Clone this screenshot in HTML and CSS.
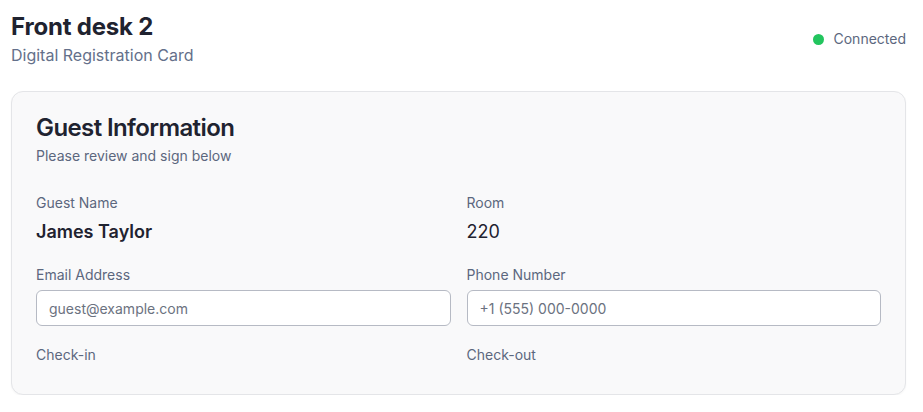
FILE: index.html
```html
<!DOCTYPE html>
<html>
<head>
<meta charset="utf-8">
<link rel="stylesheet" href="styles.css">
</head>
<body>
<div class="page">
  <header class="top">
    <div class="titles">
      <h1 class="title">Front desk 2</h1>
      <p class="subtitle">Digital Registration Card</p>
    </div>
    <div class="status"><span class="dot"></span><span class="status-text">Connected</span></div>
  </header>
  <section class="card">
    <h2 class="card-title">Guest Information</h2>
    <p class="card-sub">Please review and sign below</p>
    <div class="grid">
      <div class="field">
        <div class="label">Guest Name</div>
        <div class="value strong">James Taylor</div>
      </div>
      <div class="field">
        <div class="label">Room</div>
        <div class="value">220</div>
      </div>
      <div class="field">
        <div class="label">Email Address</div>
        <input class="input" type="text" placeholder="guest@example.com">
      </div>
      <div class="field">
        <div class="label">Phone Number</div>
        <input class="input" type="text" placeholder="+1 (555) 000-0000">
      </div>
      <div class="field">
        <div class="label">Check-in</div>
      </div>
      <div class="field">
        <div class="label">Check-out</div>
      </div>
    </div>
  </section>
</div>
</body>
</html>
```
FILE: styles.css
```css
* { box-sizing: border-box; }
html, body { margin: 0; padding: 0; background: #ffffff; }
body { font-family: Inter, "Noto Sans", sans-serif; color: #1f2937; }
.page { padding: 12px 17px 0 11px; }
.top { display: flex; justify-content: space-between; align-items: flex-start; }
.title { margin: 0; font-size: 24px; line-height: 30px; font-weight: 700; color: #1f2330; letter-spacing: -0.2px; }
.subtitle { margin: 1px 0 0; font-size: 16px; line-height: 24px; color: #64708a; }
.status { display: flex; align-items: center; gap: 9px; margin-top: 18px; }
.dot { width: 11px; height: 11px; border-radius: 50%; background: #22c55e; }
.status-text { font-size: 14px; line-height: 18px; color: #5c677e; }
.card { margin-top: 24px; background: #f9f9fa; border: 1px solid #e4e5e8; border-radius: 12px; padding: 20px 24px 29px; box-shadow: 0 1px 2px rgba(0,0,0,0.04); }
.card-title { margin: 0; font-size: 24px; line-height: 32px; font-weight: 600; color: #1f2330; letter-spacing: -0.6px; }
.card-sub { margin: 2px 0 0; font-size: 14px; line-height: 20px; color: #5c677e; }
.grid { display: grid; grid-template-columns: 1fr 1fr; column-gap: 16px; row-gap: 19px; margin-top: 27px; }
.label { font-size: 14px; line-height: 20px; color: #5c677e; }
.value { margin-top: 5px; font-size: 18px; line-height: 28px; color: #1f2330; }
.value.strong { font-weight: 600; }
.input { display: block; width: 100%; height: 36px; margin-top: 5px; border: 1px solid #b6bac4; border-radius: 6px; background: #fff; padding: 0 12px; font-family: Inter, "Noto Sans", sans-serif; font-size: 14px; color: #1f2330; outline: none; }
.input::placeholder { color: #6b7280; }
```
